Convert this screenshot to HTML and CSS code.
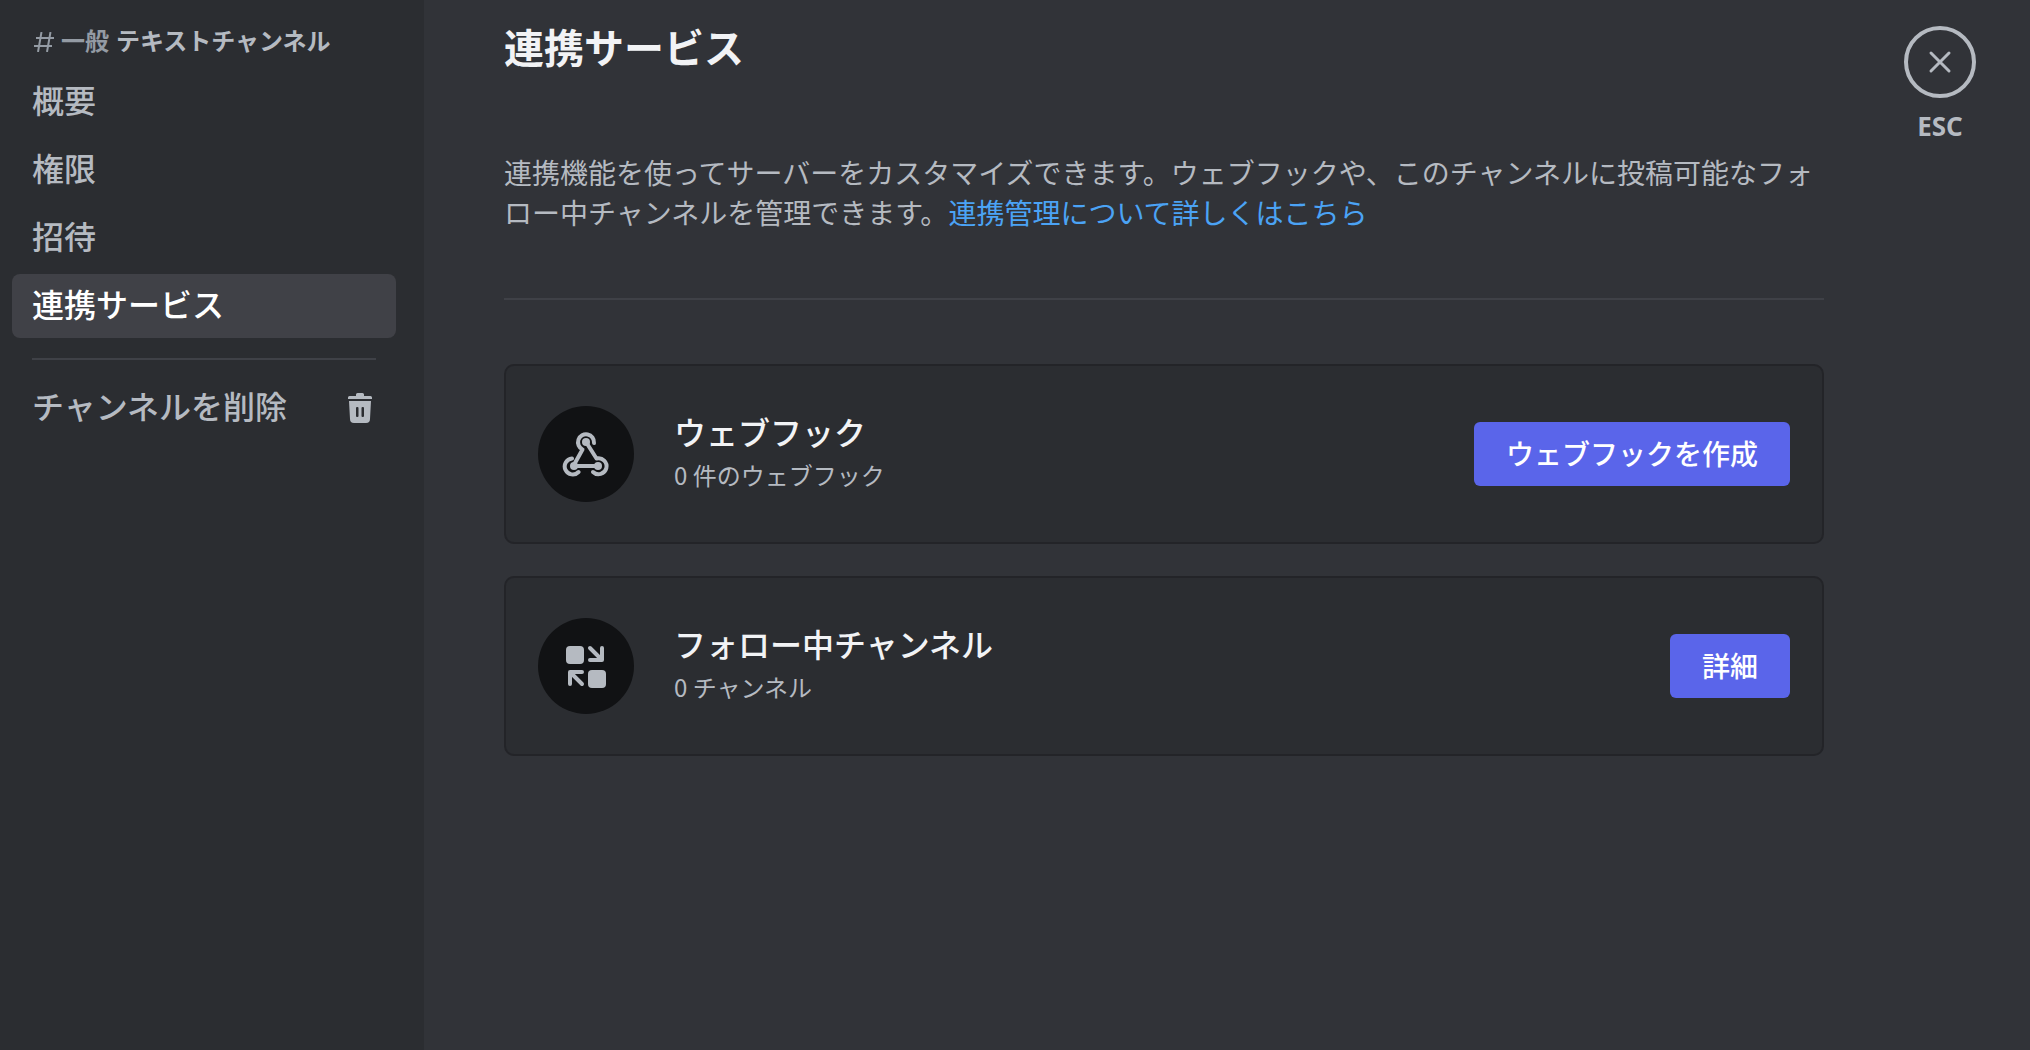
FILE: index.html
```
<!DOCTYPE html>
<html lang="ja">
<head>
    <meta charset="UTF-8">
    <meta name="viewport" content="width=device-width, initial-scale=1.0">
    <title>連携サービス</title>
    <link rel="stylesheet" href="styles.css">
</head>
<body>
    <div class="settings">
        <nav class="sidebar">
            <h2 class="channel-name">
                <svg class="hash" viewBox="0 0 20 20" aria-hidden="true">
                    <path d="M7.500 0 4 20M16.500 0 13 20M2 6h18M0 14h18"/>
                </svg>
                <span class="channel">一般</span>
                <span>テキストチャンネル</span>
            </h2>
            <a class="nav-item" href="#overview">概要</a>
            <a class="nav-item" href="#permissions">権限</a>
            <a class="nav-item" href="#invites">招待</a>
            <a class="nav-item active" href="#integrations">連携サービス</a>
            <hr class="nav-separator">
            <button class="nav-item delete" type="button">
                チャンネルを削除
                <svg class="trash" viewBox="0 0 24 30" aria-hidden="true">
                    <path d="M8 3V1.500Q8 0 9.500 0h5Q16 0 16 1.500V3h6.500Q24 3 24 4.500V6H0V4.500Q0 3 1.500 3z"/>
                    <path fill-rule="evenodd" d="M1 8h22l-1 18q0 4-4 4H6q-4 0-4-4zM8 15v8q0 1 1 1h.500q1 0 1-1v-8q0-1-1-1H9q-1 0-1 1zm5.500 0v8q0 1 1 1h.500q1 0 1-1v-8q0-1-1-1h-.500q-1 0-1 1z"/>
                </svg>
            </button>
        </nav>

        <main class="content">
            <h1>連携サービス</h1>
            <p class="description">連携機能を使ってサーバーをカスタマイズできます。ウェブフックや、このチャンネルに投稿可能なフォロー中チャンネルを管理できます。<a href="#help">連携管理について詳しくはこちら</a></p>
            <hr class="divider">

            <section class="card">
                <div class="card-icon">
                    <svg width="48" height="48" viewBox="0 0 48 48" aria-hidden="true">
                        <g class="stroke">
                            <path d="M32 13A8 8 0 1 0 20.500 19.500L13 33"/>
                            <path d="M10 28.500A8 8 0 1 0 16.500 42"/>
                            <path d="M24 12 34.500 28.500A8 8 0 1 1 31 42"/>
                            <path d="M12 36h24"/>
                        </g>
                        <circle cx="24" cy="12" r="4"/>
                        <circle cx="12" cy="36" r="4"/>
                        <circle cx="36" cy="36" r="4"/>
                    </svg>
                </div>
                <div class="card-text">
                    <h3>ウェブフック</h3>
                    <p>0 件のウェブフック</p>
                </div>
                <button class="btn" type="button">ウェブフックを作成</button>
            </section>

            <section class="card">
                <div class="card-icon">
                    <svg width="48" height="48" viewBox="0 0 48 48" aria-hidden="true">
                        <rect x="4" y="4" width="18" height="18" rx="4"/>
                        <rect x="26" y="28" width="18" height="18" rx="4"/>
                        <g class="arrow">
                            <path d="M28 6 39 17M40 6v12H28"/>
                            <path d="M20 42 9 31M8 42V30h12"/>
                        </g>
                    </svg>
                </div>
                <div class="card-text">
                    <h3>フォロー中チャンネル</h3>
                    <p>0 チャンネル</p>
                </div>
                <button class="btn" type="button">詳細</button>
            </section>
        </main>

        <div class="close">
            <button class="close-btn" type="button" aria-label="閉じる">
                <svg width="24" height="24" viewBox="0 0 24 24" aria-hidden="true">
                    <path d="M3 3l18 18M21 3 3 21"/>
                </svg>
            </button>
            <span class="close-key">ESC</span>
        </div>
    </div>
</body>
</html>
```
FILE: styles.css
```
* {
    box-sizing: border-box;
}

body {
    margin: 0;
    background: #313338;
    color: #b5bac1;
    font-family: "Noto Sans CJK JP", sans-serif;
}

h1, h2, h3, p {
    margin: 0;
}

hr {
    border: none;
    height: 2px;
    background: #3f4147;
}

button {
    border: none;
    font-family: inherit;
    cursor: pointer;
}

.settings {
    display: flex;
    min-height: 100vh;
}

/* Sidebar */
.sidebar {
    flex: none;
    width: 424px;
    padding: 24px 28px 24px 12px;
    background: #2b2d31;
}

.channel-name {
    display: flex;
    align-items: center;
    gap: 7px;
    height: 36px;
    margin-bottom: 10px;
    padding: 0 0 4px 22px;
    font-size: 24px;
    font-weight: 700;
    line-height: 32px;
}

.channel-name .channel {
    color: #949ba4;
}

.hash {
    width: 20px;
    height: 20px;
    margin-top: 4px;
    fill: none;
    stroke: #949ba4;
    stroke-width: 2;
}

.nav-item {
    display: flex;
    align-items: center;
    justify-content: space-between;
    width: 100%;
    height: 64px;
    margin-bottom: 4px;
    padding: 0 20px 6px;
    border-radius: 8px;
    background: none;
    color: #b5bac1;
    font-size: 32px;
    font-weight: 500;
    line-height: 40px;
    text-decoration: none;
}

.nav-item:hover {
    background: #35373c;
}

.nav-item.active {
    background: #404147;
    color: #fff;
}

.nav-separator {
    margin: 20px 20px 16px;
}

.trash {
    width: 24px;
    height: 30px;
    margin: 6px 4px 0 0;
    fill: #b5bac1;
}

/* Content */
.content {
    flex: 1;
    max-width: 1480px;
    padding: 22px 80px;
}

h1 {
    color: #f2f3f5;
    font-size: 40px;
    font-weight: 700;
    line-height: 48px;
}

.description {
    margin-top: 82px;
    font-size: 28px;
    line-height: 40px;
}

.description a {
    color: #4ba3f5;
    text-decoration: none;
}

.description a:hover {
    text-decoration: underline;
}

.divider {
    margin: 66px 0 64px;
}

.card {
    display: flex;
    align-items: center;
    gap: 40px;
    min-height: 180px;
    margin-bottom: 32px;
    padding: 32px;
    border: 2px solid #232428;
    border-radius: 10px;
    background: #2b2d31;
}

.card-icon {
    display: flex;
    flex: none;
    align-items: center;
    justify-content: center;
    width: 96px;
    height: 96px;
    border-radius: 50%;
    background: #111214;
}

.card-icon svg {
    fill: #b5bac1;
}

.card-icon .stroke,
.card-icon .arrow {
    fill: none;
    stroke: #b5bac1;
    stroke-width: 4;
    stroke-linecap: round;
    stroke-linejoin: round;
}

.card-text {
    flex: 1;
    padding-bottom: 6px;
}

.card-text h3 {
    color: #f2f3f5;
    font-size: 32px;
    font-weight: 500;
    line-height: 40px;
}

.card-text p {
    margin-top: 8px;
    font-size: 24px;
    line-height: 32px;
}

.btn {
    flex: none;
    height: 64px;
    padding: 0 32px 3px;
    border-radius: 6px;
    background: #5a65ea;
    color: #fff;
    font-size: 28px;
    font-weight: 500;
    line-height: 32px;
}

.btn:hover {
    background: #4752c4;
}

/* Close button */
.close {
    display: flex;
    flex-direction: column;
    align-items: center;
    gap: 12px;
    width: 72px;
    margin-top: 26px;
}

.close-btn {
    display: flex;
    align-items: center;
    justify-content: center;
    width: 72px;
    height: 72px;
    padding: 0;
    border: 4px solid #b5bac1;
    border-radius: 50%;
    background: none;
}

.close-btn svg {
    fill: none;
    stroke: #b5bac1;
    stroke-width: 3;
    stroke-linecap: round;
}

.close-key {
    font-family: "Noto Sans", sans-serif;
    font-size: 26px;
    font-weight: 700;
    line-height: 32px;
}
```
